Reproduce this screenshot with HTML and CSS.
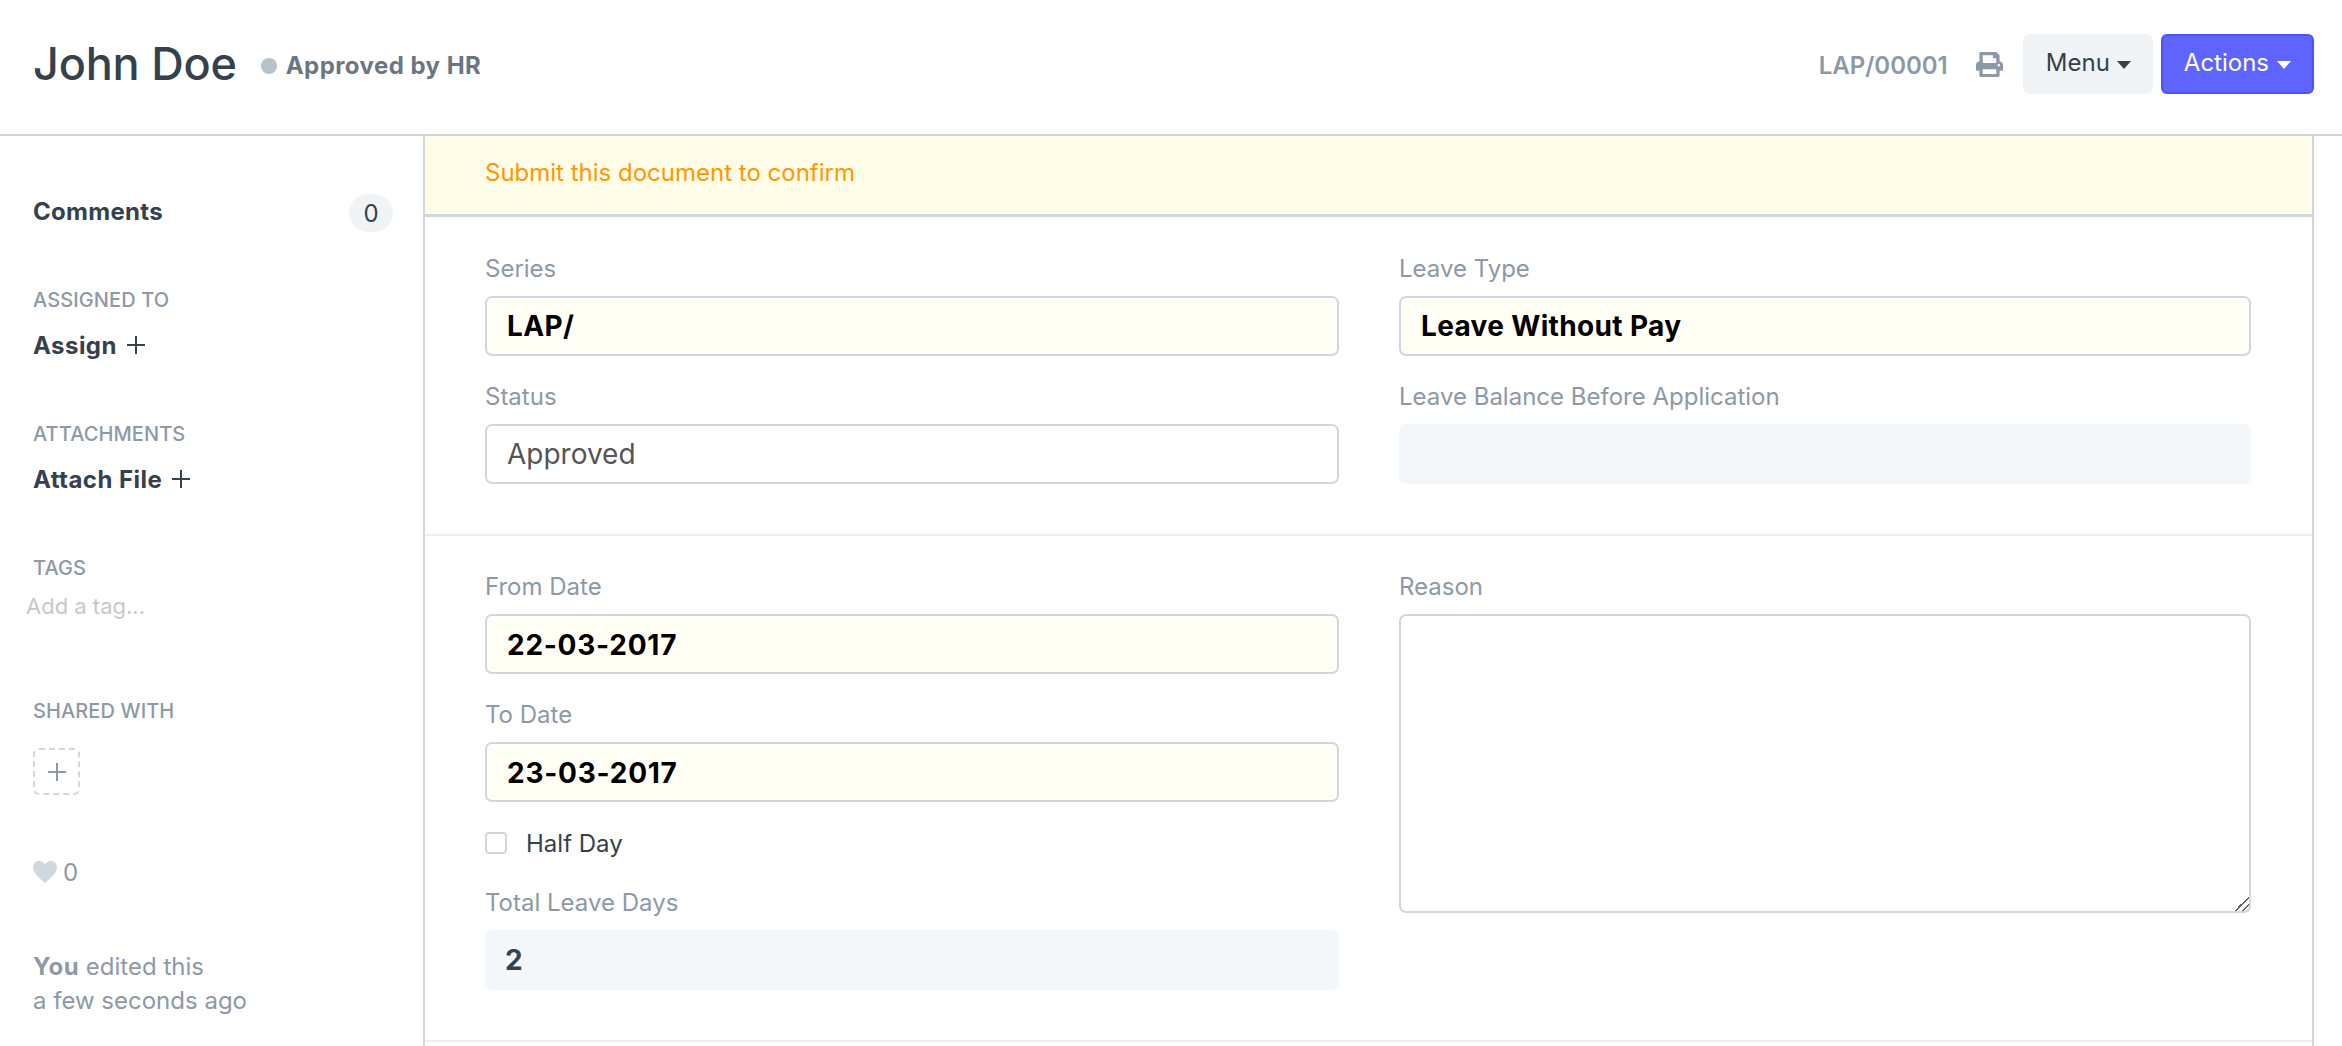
FILE: index.html
```html
<!DOCTYPE html>
<html lang="en">
<head>
<meta charset="utf-8">
<title>John Doe</title>
<link rel="stylesheet" href="styles.css">
</head>
<body>
<header class="page-head">
  <div class="title-area">
    <h1 class="title">John Doe</h1>
    <span class="status-dot"></span>
    <span class="status-text">Approved by HR</span>
  </div>
  <div class="head-actions">
    <span class="doc-name">LAP/00001</span>
    <svg class="print-icon" viewBox="0 0 512 512" width="27" height="25" preserveAspectRatio="none"><path d="M448 192V77.25c0-8.49-3.37-16.62-9.37-22.63L393.37 9.37c-6-6-14.14-9.37-22.63-9.37H96C78.33 0 64 14.33 64 32v160c-35.35 0-64 28.65-64 64v112c0 8.84 7.16 16 16 16h48v96c0 17.67 14.33 32 32 32h320c17.67 0 32-14.33 32-32v-96h48c8.84 0 16-7.16 16-16V256c0-35.35-28.65-64-64-64zm-64 256H128v-96h256v96zm0-224H128V64h192v48c0 8.84 7.16 16 16 16h48v96zm48 72c-13.25 0-24-10.75-24-24 0-13.26 10.75-24 24-24s24 10.74 24 24c0 13.25-10.75 24-24 24z"/></svg>
    <button class="btn btn-menu">Menu<span class="caret"></span></button>
    <button class="btn btn-primary">Actions<span class="caret"></span></button>
  </div>
</header>
<div class="layout">
  <aside class="sidebar">
    <div class="comments-row">
      <span class="comments-label">Comments</span>
      <span class="badge">0</span>
    </div>
    <section class="side-group">
      <h2 class="side-heading">ASSIGNED TO</h2>
      <div class="side-link">Assign
        <svg class="plus" viewBox="0 0 18 18" width="18" height="18"><path d="M9 0v18M0 9h18"/></svg>
      </div>
    </section>
    <section class="side-group">
      <h2 class="side-heading">ATTACHMENTS</h2>
      <div class="side-link">Attach File
        <svg class="plus" viewBox="0 0 18 18" width="18" height="18"><path d="M9 0v18M0 9h18"/></svg>
      </div>
    </section>
    <section class="side-group tags-group">
      <h2 class="side-heading">TAGS</h2>
      <div class="tag-input">Add a tag...</div>
    </section>
    <section class="side-group shared-group">
      <h2 class="side-heading">SHARED WITH</h2>
      <div class="share-box">
        <svg class="plus plus-muted" viewBox="0 0 18 18" width="18" height="18"><path d="M9 0v18M0 9h18"/></svg>
      </div>
    </section>
    <div class="likes">
      <svg class="heart" viewBox="0 0 24 22" width="24" height="22"><path d="M12 22C9.5 19.6 0 12.8 0 6.4 0 2.6 2.8 0 6.2 0 8.6 0 10.8 1.3 12 3.4 13.2 1.3 15.4 0 17.8 0 21.2 0 24 2.6 24 6.4 24 12.8 14.5 19.6 12 22z"/></svg>
      <span>0</span>
    </div>
    <div class="modified"><b>You</b> edited this<br>a few seconds ago</div>
  </aside>
  <main class="form-col">
    <div class="banner">Submit this document to confirm</div>
    <section class="form-section">
      <div class="form-col-item">
        <div class="field">
          <label class="label">Series</label>
          <div class="control required">LAP/</div>
        </div>
        <div class="field">
          <label class="label">Status</label>
          <div class="control plain">Approved</div>
        </div>
      </div>
      <div class="form-col-item">
        <div class="field">
          <label class="label">Leave Type</label>
          <div class="control required">Leave Without Pay</div>
        </div>
        <div class="field">
          <label class="label">Leave Balance Before Application</label>
          <div class="control readonly"></div>
        </div>
      </div>
    </section>
    <section class="form-section">
      <div class="form-col-item">
        <div class="field">
          <label class="label">From Date</label>
          <div class="control required date">22-03-2017</div>
        </div>
        <div class="field">
          <label class="label">To Date</label>
          <div class="control required date">23-03-2017</div>
        </div>
        <div class="check-row">
          <span class="checkbox"></span>
          <span class="check-label">Half Day</span>
        </div>
        <div class="field">
          <label class="label">Total Leave Days</label>
          <div class="control readonly strong">2</div>
        </div>
      </div>
      <div class="form-col-item">
        <div class="field">
          <label class="label" for="reason">Reason</label>
          <textarea class="textarea" id="reason"></textarea>
        </div>
      </div>
    </section>
  </main>
</div>
</body>
</html>
```
FILE: styles.css
```css
* { box-sizing: border-box; }
html, body { margin: 0; padding: 0; height: 100%; }
body {
  height: 1046px;
  overflow: hidden;
  background: #fff;
  color: #36414c;
  font-family: Inter, "Liberation Sans", sans-serif;
  font-size: 24px;
}
.page-head {
  height: 136px;
  border-bottom: 2px solid #d1d8dd;
  display: flex;
  justify-content: space-between;
  padding: 34px 28px 0 33px;
}
.title-area { display: flex; align-items: center; height: 60px; }
.title { margin: 0; font-size: 45px; font-weight: 450; line-height: 60px; letter-spacing: -0.2px; color: #36414c; }
.status-dot { width: 16px; height: 16px; border-radius: 50%; background: #b8c2cc; margin: 4px 9px 0 24px; }
.status-text { font-size: 24px; font-weight: 700; letter-spacing: 0.45px; color: #6c7680; margin-top: 2px; }
.head-actions { display: flex; align-items: center; height: 60px; }
.doc-name { font-size: 24px; font-weight: 600; color: #8d99a6; margin-top: 2px; }
.print-icon { fill: #8d99a6; margin: 0 20px 0 28px; }
.btn {
  height: 60px;
  border-radius: 6px;
  font-family: inherit;
  font-size: 24px;
  display: flex;
  align-items: center;
  padding: 0 20px 3px;
  cursor: pointer;
}
.btn-menu { background: #f0f4f7; border: 2px solid #f0f4f7; color: #36414c; margin-right: 8px; padding-left: 21px; }
.btn-menu .caret { margin-left: 7px; }
.btn-primary { background: #5e64ff; border: 2px solid #4d52ff; color: #fff; padding-left: 21px; padding-right: 21px; }
.caret {
  display: inline-block;
  width: 0;
  height: 0;
  margin-left: 8px;
  margin-top: 5px;
  border-left: 7.5px solid transparent;
  border-right: 7.5px solid transparent;
  border-top: 8px solid currentColor;
}
.layout { display: flex; height: 910px; }
.sidebar {
  width: 425px;
  flex: none;
  border-right: 2px solid #d1d8dd;
  padding: 58px 30px 0 33px;
}
.comments-row { display: flex; justify-content: space-between; align-items: center; height: 38px; }
.comments-label { font-weight: 700; font-size: 24px; letter-spacing: 0.3px; padding-bottom: 3px; }
.badge {
  width: 44px;
  height: 38px;
  border-radius: 19px;
  background: #f0f4f7;
  display: flex;
  align-items: center;
  justify-content: center;
  font-size: 24px;
}
.side-group { margin-top: 56px; }
.side-group + .side-group { margin-top: 62px; }
.side-heading { margin: 0; font-size: 20px; font-weight: 500; letter-spacing: 0.1px; line-height: 24px; color: #8d99a6; }
.side-link { display: flex; align-items: center; gap: 10px; height: 30px; margin-top: 18px; font-weight: 700; font-size: 24px; letter-spacing: 0.45px; }
.plus { fill: none; stroke: #36414c; stroke-width: 2; flex: none; }
.plus-muted { stroke: #8d99a6; }
.tag-input { margin: 11px 0 0 -7px; height: 30px; line-height: 30px; font-size: 22px; color: #c8c8c8; }
.side-group.shared-group { margin-top: 78px; }
.share-box {
  width: 47px;
  height: 47px;
  margin-top: 25px;
  border: 2px dashed #d1d8dd;
  border-radius: 6px;
  display: flex;
  align-items: center;
  justify-content: center;
}
.likes { display: flex; align-items: center; gap: 6px; height: 30px; margin-top: 62px; color: #8d99a6; font-size: 24px; }
.heart { fill: #d1d8dd; }
.modified { margin-top: 63px; font-size: 24px; line-height: 34px; color: #8d99a6; }
.modified b { font-weight: 700; letter-spacing: 0.5px; }
.form-col { width: 1889px; flex: none; border-right: 2px solid #d1d8dd; }
.banner {
  height: 81px;
  background: #fffce7;
  border-bottom: 3px solid #d1d8dd;
  padding: 0 60px 5px;
  display: flex;
  align-items: center;
  color: #ff9800;
  font-size: 24px;
}
.form-section {
  display: grid;
  grid-template-columns: 854px 852px;
  column-gap: 60px;
  padding: 37px 61px 24px 60px;
  border-bottom: 2px solid #ebeff2;
}
.form-section + .form-section { padding-top: 36px; }
.field { margin-bottom: 26px; }
.label { display: block; height: 30px; line-height: 30px; margin-bottom: 12px; font-size: 24px; color: #8d99a6; }
.control {
  height: 60px;
  border-radius: 7px;
  padding: 0 20px;
  display: flex;
  align-items: center;
  font-size: 28px;
}
.required { background: #fffff5; border: 2px solid #d1d8dd; color: #000; font-weight: 700; letter-spacing: 0.35px; }
.date { letter-spacing: 0.75px; padding-top: 2px; }
.plain { background: #fff; border: 2px solid #d1d8dd; color: #555; font-weight: 400; }
.readonly { background: #f4f7fa; }
.strong { font-weight: 700; color: #36414c; }
.check-row { display: flex; align-items: center; height: 30px; margin-bottom: 30px; }
.checkbox { width: 22px; height: 22px; border: 2px solid #d1d8dd; border-radius: 4px; background: #fff; margin-right: 19px; }
.check-label { font-size: 24px; color: #36414c; }
.textarea {
  display: block;
  width: 100%;
  height: 299px;
  margin: 0;
  background: #fff;
  border: 2px solid #d1d8dd;
  border-radius: 7px;
  resize: vertical;
  outline: none;
}
.textarea::-webkit-resizer {
  background: linear-gradient(135deg, transparent 50%, #666 50%, #666 59%, transparent 59%, transparent 74%, #666 74%, #666 83%, transparent 83%);
}
```
